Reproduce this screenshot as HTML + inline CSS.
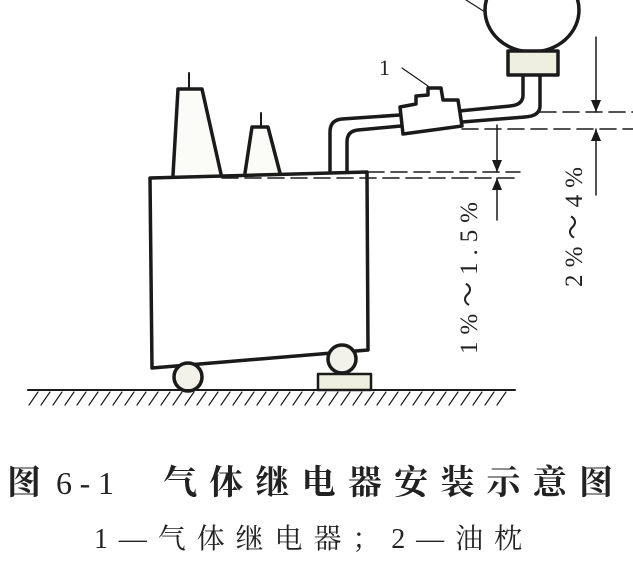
<!DOCTYPE html>
<html><head><meta charset="utf-8"><style>
html,body{margin:0;padding:0;background:#fff;}
svg{display:block;}
</style></head><body>
<svg width="633" height="566" viewBox="0 0 633 566" xmlns="http://www.w3.org/2000/svg">
<rect width="633" height="566" fill="#fff"/>
<g stroke="#1a1a1a" fill="none" stroke-linecap="round" stroke-linejoin="round">
<ellipse cx="532" cy="10" rx="47" ry="42" stroke-width="3.5" fill="#fff"/>
<line x1="466" y1="0" x2="485" y2="12" stroke-width="1.2"/>
<rect x="508" y="51" width="50" height="24" fill="#efefe0" stroke-width="3.5"/>
<path d="M523 76 L523 95 Q523 105 510 106 L459 111" stroke-width="3.5"/>
<path d="M540 76 L540 106 Q540 116 525 117 L462 122" stroke-width="3.5"/>
<path d="M400 107 L403 134 L462 126 L458 100 L443 100 L441 88 L428 88 L428 95 L416 96 L416 104 Z" stroke-width="3.5" fill="#fff"/>
<line x1="402" y1="68" x2="428" y2="86" stroke-width="1.2"/>
<path d="M400 115 L342 119 Q330 120 330 132 L330 172" stroke-width="3.5"/>
<path d="M401 126 L358 130 Q347 131 347 142 L347 172" stroke-width="3.5"/>
<line x1="189" y1="73" x2="189" y2="89" stroke-width="2"/>
<path d="M173 175 L178 89 L202 89 L221 174" stroke-width="3.5" fill="#fbfbf7"/>
<line x1="261" y1="113" x2="261" y2="127" stroke-width="2"/>
<path d="M245 173 L252 127 L268 127 L280 173" stroke-width="3.5" fill="#fbfbf7"/>
<path d="M150 178 L367 172 L368 350 L152 368 Z" stroke-width="3.5" fill="#fff"/>
<circle cx="188" cy="377" r="14" stroke-width="3.5" fill="#f2f2ea"/>
<circle cx="342" cy="359" r="14" stroke-width="3.5" fill="#f2f2ea"/>
<rect x="318" y="374" width="53" height="16" stroke-width="2.5" fill="#efefe0"/>
<line x1="28" y1="390" x2="515" y2="390" stroke-width="2"/>
<g stroke-width="1.2">
<path d="M38 392 l-9 13 M50 392 l-9 13 M62 392 l-9 13 M74 392 l-9 13 M86 392 l-9 13 M98 392 l-9 13 M110 392 l-9 13 M122 392 l-9 13 M134 392 l-9 13 M146 392 l-9 13 M158 392 l-9 13 M170 392 l-9 13 M182 392 l-9 13 M194 392 l-9 13 M206 392 l-9 13 M218 392 l-9 13 M230 392 l-9 13 M242 392 l-9 13 M254 392 l-9 13 M266 392 l-9 13 M278 392 l-9 13 M290 392 l-9 13 M302 392 l-9 13 M314 392 l-9 13 M326 392 l-9 13 M338 392 l-9 13 M350 392 l-9 13 M362 392 l-9 13 M374 392 l-9 13 M386 392 l-9 13 M398 392 l-9 13 M410 392 l-9 13 M422 392 l-9 13 M434 392 l-9 13 M446 392 l-9 13 M458 392 l-9 13 M470 392 l-9 13 M482 392 l-9 13 M494 392 l-9 13 M506 392 l-9 13"/>
</g>
<g stroke-width="1.6" stroke-dasharray="16 7">
<line x1="222" y1="178" x2="520" y2="178"/>
<line x1="368" y1="172" x2="520" y2="172"/>
<line x1="540" y1="112" x2="633" y2="112"/>
<line x1="462" y1="129" x2="633" y2="129"/>
</g>
<line x1="497" y1="125" x2="497" y2="172" stroke-width="1.5"/>
<line x1="497" y1="178" x2="497" y2="220" stroke-width="1.5"/>
<line x1="596" y1="37" x2="596" y2="112" stroke-width="1.5"/>
<line x1="596" y1="129" x2="596" y2="195" stroke-width="1.5"/>
</g>
<g fill="#1a1a1a">
<path d="M492 160 L502 160 L497 172 Z"/>
<path d="M492 190 L502 190 L497 178 Z"/>
<path d="M591 100 L601 100 L596 112 Z"/>
<path d="M591 141 L601 141 L596 129 Z"/>
</g>
<g font-family="Liberation Serif, serif" fill="#222">
<text x="379" y="75" font-size="22">1</text>
<text transform="translate(477,354) rotate(-90)" font-size="25" textLength="152" lengthAdjust="spacing">1%～1.5%</text>
<text transform="translate(582,287) rotate(-90)" font-size="25" textLength="120" lengthAdjust="spacing">2%～4%</text>
</g>
<g font-family="Liberation Serif, 'Noto Serif CJK SC', serif" fill="#222">
<text x="7" y="494" font-size="34" font-weight="bold">图</text>
<text x="56" y="494" font-size="32" textLength="58" lengthAdjust="spacing">6-1</text>
<text x="163" y="494" font-size="34" font-weight="bold" textLength="450" lengthAdjust="spacing">气体继电器安装示意图</text>
<text x="94" y="548" font-size="28" textLength="428" lengthAdjust="spacing">1—气体继电器；2—油枕</text>
</g>
</svg>
</body></html>
